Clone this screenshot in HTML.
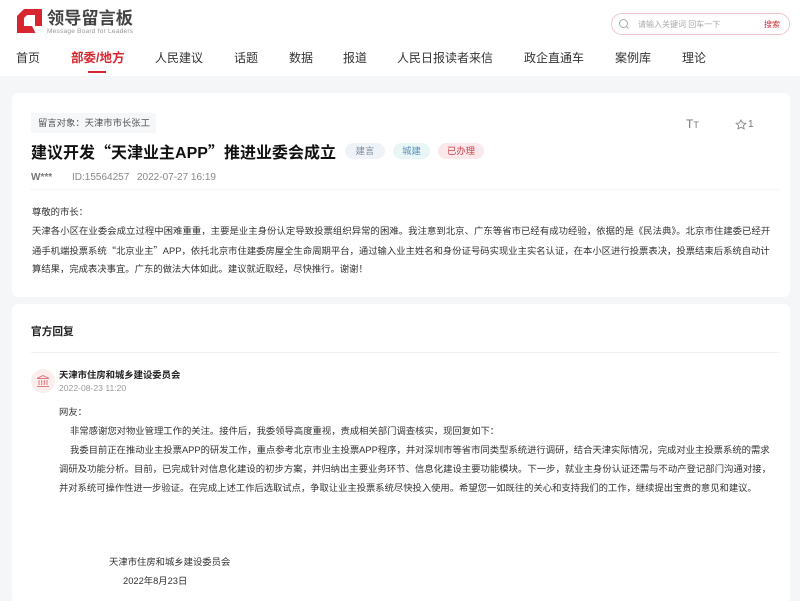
<!DOCTYPE html>
<html lang="zh"><head><meta charset="utf-8"><title>领导留言板</title>
<style>
html,body{margin:0;padding:0}
body{width:800px;height:601px;overflow:hidden;background:#f5f6f8;position:relative;font-family:"Liberation Sans","Noto Sans CJK SC",sans-serif;color:#333}
.a{position:absolute;white-space:nowrap;line-height:1}
.hd{position:absolute;left:0;top:0;width:800px;height:76px;background:#fff}
.card{position:absolute;left:12px;width:778px;background:#fff;border-radius:6px}
.n{font-size:12px;top:52px;color:#333}
.t{font-size:9.33px;color:#333}
.q{font-family:"Noto Sans CJK SC",sans-serif}
.tag{position:absolute;top:143px;height:16px;line-height:16px;border-radius:8px;font-size:9.33px;text-align:center}
#w{position:absolute;left:0;top:0;width:800px;height:601px;overflow:hidden;filter:blur(.3px)}
</style></head><body><div id="w">
<div class="hd"></div>
<svg class="a" style="left:17px;top:9px" width="26" height="25" viewBox="17 9 26 25"><path d="M24 9H42V33H17V16Z" fill="#d7262f"/><path d="M27 15H35V26H43V34H36L32 26H24V18Z" fill="#fff"/></svg>
<div class="a" style="left:47px;top:10px;font-size:17.2px;font-weight:700;color:#444">领导留言板</div>
<svg class="a" style="left:47px;top:26px" width="88" height="9"><text x="0" y="7" font-size="6.5" fill="#999" textLength="86" font-family="Liberation Sans">Message Board for Leaders</text></svg>
<div class="a" style="left:611px;top:13px;width:179px;height:22px;box-sizing:border-box;border:1px solid #f0c4c9;border-radius:11px"></div>
<svg class="a" style="left:618px;top:18px" width="12" height="12" viewBox="0 0 12 12" fill="none" stroke="#aaa"><circle cx="5.5" cy="5.5" r="4"/><path d="M8.5 8.5L10.5 10.5"/></svg>
<div class="a" style="left:638px;top:21px;font-size:8px;color:#aaa">请输入关键词 回车一下</div>
<div class="a" style="left:764px;top:21px;font-size:8px;color:#c8303a">搜索</div>
<div class="a n" style="left:16px">首页</div>
<div class="a n" style="left:71px;color:#d7262f;font-weight:700;font-size:12.5px">部委/地方</div>
<div class="a" style="left:88px;top:71px;width:18px;height:2px;background:#d7262f"></div>
<div class="a n" style="left:155px">人民建议</div>
<div class="a n" style="left:234px">话题</div>
<div class="a n" style="left:289px">数据</div>
<div class="a n" style="left:343px">报道</div>
<div class="a n" style="left:397px">人民日报读者来信</div>
<div class="a n" style="left:524px">政企直通车</div>
<div class="a n" style="left:615px">案例库</div>
<div class="a n" style="left:682px">理论</div>

<div class="card" style="top:93px;height:204px"></div>
<div class="card" style="top:304px;height:300px"></div>

<div class="a" style="left:31px;top:113px;width:125px;height:20px;background:#f6f7f9;border-radius:2px"></div>
<div class="a" style="left:38px;top:119px;font-size:9.33px;color:#555">留言对象&#65306;天津市市长张工</div>
<div class="a" style="left:31px;top:143px;font-size:16px;font-weight:700;color:#111">建议开发<span class="q">“</span>天津业主APP<span class="q">”</span>推进业委会成立</div>
<div class="tag" style="left:345px;width:40px;background:#eff2f7;color:#7e8ca0">建言</div>
<div class="tag" style="left:393px;width:37px;background:#e9f6f6;color:#5a90b8">城建</div>
<div class="tag" style="left:438px;width:46px;background:#fbe8ea;color:#c8404c">已办理</div>
<div class="a" style="left:686px;top:118px;font-size:12px;color:#777">T<span style="font-size:9px">T</span></div>
<svg class="a" style="left:735px;top:119px" width="12" height="11" viewBox="0 0 12 11" fill="none" stroke="#888" stroke-width=".9"><path d="M6 1L7.5 4L10.8 4.3L8.4 6.5L9.1 9.9L6 8.2L2.9 9.9L3.6 6.5L1.2 4.3L4.5 4Z"/></svg>
<div class="a" style="left:748px;top:120px;font-size:10px;color:#777">1</div>
<div class="a" style="left:31px;top:173px;font-size:10px;font-weight:700;color:#777">W***</div>
<div class="a" style="left:72px;top:173px;font-size:10px;color:#888">ID:15564257</div>
<div class="a" style="left:137px;top:173px;font-size:10px;color:#888">2022-07-27 16:19</div>
<div class="a" style="left:31px;top:189px;width:748px;border-top:1px dotted #eee"></div>

<div class="a t" style="left:32px;top:208px">尊敬的市长&#65306;</div>
<div class="a t" style="left:32px;top:227px;letter-spacing:.076px">天津各小区在业委会成立过程中困难重重&#65292;主要是业主身份认定导致投票组织异常的困难。我注意到北京、广东等省市已经有成功经验&#65292;依据的是《民法典》。北京市住建委已经开</div>
<div class="a t" style="left:32px;top:246px;letter-spacing:.01px">通手机端投票系统<span class="q">“</span>北京业主<span class="q">”</span>APP&#65292;依托北京市住建委房屋全生命周期平台&#65292;通过输入业主姓名和身份证号码实现业主实名认证&#65292;在本小区进行投票表决&#65292;投票结束后系统自动计</div>
<div class="a t" style="left:32px;top:265px">算结果&#65292;完成表决事宜。广东的做法大体如此。建议就近取经&#65292;尽快推行。谢谢&#65281;</div>

<div class="a" style="left:31px;top:327px;font-size:10.67px;font-weight:700;color:#222">官方回复</div>
<div class="a" style="left:31px;top:352px;width:748px;height:1px;background:#f0f0f0"></div>
<div class="a" style="left:31px;top:369px;width:24px;height:24px;border-radius:50%;background:#fdeeee"></div>
<svg class="a" style="left:36px;top:374px" width="14" height="14" viewBox="0 0 14 14" fill="none" stroke="#e0797c"><path d="M1 4.5L7 1.5L13 4.5ZM3 6V11M5.7 6V11M8.3 6V11M11 6V11M1 12.5H13"/></svg>
<div class="a" style="left:59px;top:371px;font-size:9.33px;font-weight:700;color:#222">天津市住房和城乡建设委员会</div>
<div class="a" style="left:59px;top:384px;font-size:8.6px;color:#999">2022-08-23 11:20</div>
<div class="a t" style="left:59px;top:408px">网友&#65306;</div>
<div class="a t" style="left:70px;top:427px">非常感谢您对物业管理工作的关注。接件后&#65292;我委领导高度重视&#65292;责成相关部门调查核实&#65292;现回复如下&#65306;</div>
<div class="a t" style="left:70px;top:446px">我委目前正在推动业主投票APP的研发工作&#65292;重点参考北京市业主投票APP程序&#65292;并对深圳市等省市同类型系统进行调研&#65292;结合天津实际情况&#65292;完成对业主投票系统的需求</div>
<div class="a t" style="left:59px;top:465px;letter-spacing:.04px">调研及功能分析。目前&#65292;已完成针对信息化建设的初步方案&#65292;并归纳出主要业务环节、信息化建设主要功能模块。下一步&#65292;就业主身份认证还需与不动产登记部门沟通对接&#65292;</div>
<div class="a t" style="left:59px;top:484px;letter-spacing:-.025px">并对系统可操作性进一步验证。在完成上述工作后选取试点&#65292;争取让业主投票系统尽快投入使用。希望您一如既往的关心和支持我们的工作&#65292;继续提出宝贵的意见和建议。</div>
<div class="a t" style="left:109px;top:558px">天津市住房和城乡建设委员会</div>
<div class="a t" style="left:123px;top:577px">2022年8月23日</div>
</div></body></html>
